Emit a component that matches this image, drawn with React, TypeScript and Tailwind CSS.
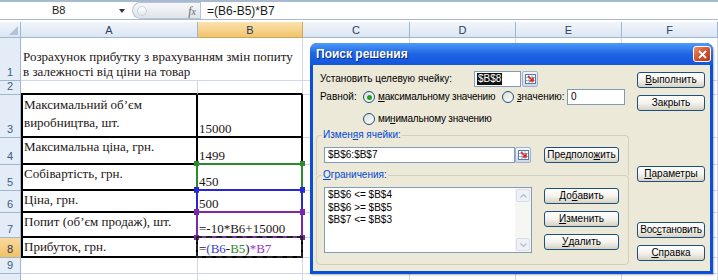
import type { ReactNode } from "react";

const gl = "border-r border-b border-[#d0d7e5]";

function RowHead({ n, on = false }: { n?: number; on?: boolean }) {
  return (
    <div
      className={`w-[21px] shrink-0 flex items-end justify-center pb-[1px] text-[11px] leading-[13px] font-['Liberation_Sans',Arial,sans-serif] border-r border-b border-[#9eb6ce] ${
        on ? "bg-gradient-to-b from-[#f9d99f] to-[#f1c15f] text-[#1e395b]" : "bg-[#e4ecf7] text-[#3e5c80]"
      }`}
    >
      {n}
    </div>
  );
}

function Rest() {
  return (
    <>
      <div className={`w-[107px] shrink-0 ${gl}`} />
      <div className={`w-[106px] shrink-0 ${gl}`} />
      <div className={`w-[106px] shrink-0 ${gl}`} />
      <div className={`w-[96px] shrink-0 ${gl}`} />
    </>
  );
}

function Corner({ pos, bg }: { pos: string; bg: string }) {
  return <div className={`absolute w-[5px] h-[5px] ${pos} ${bg}`} />;
}

function RangeBox({ border, dot }: { border: string; dot: string }) {
  return (
    <div className={`absolute -left-[2px] -top-[2px] -right-[2px] -bottom-[2px] border-2 ${border}`}>
      <Corner pos="-left-[4px] -top-[4px]" bg={dot} />
      <Corner pos="-right-[4px] -top-[4px]" bg={dot} />
      <Corner pos="-left-[4px] -bottom-[4px]" bg={dot} />
      <Corner pos="-right-[4px] -bottom-[4px]" bg={dot} />
    </div>
  );
}

type R = { n: number; h: string; a: ReactNode; b?: ReactNode; aCls?: string; box?: ReactNode; on?: boolean };

const rows: R[] = [
  { n: 3, h: "h-[43px]", a: <>Максимальний об’єм<br />виробництва, шт.</>, aCls: "leading-[18px] pt-[1px]", b: "15000" },
  { n: 4, h: "h-[27px]", a: "Максимальна ціна, грн.", b: "1499" },
  { n: 5, h: "h-[26px]", a: "Собівартість, грн.", b: "450", box: <RangeBox border="border-[#2e8a2e]" dot="bg-[#2e8a2e]" /> },
  { n: 6, h: "h-[22px]", a: "Ціна, грн.", b: "500", box: <RangeBox border="border-[#2727d8]" dot="bg-[#2727d8]" /> },
  { n: 7, h: "h-[25px]", a: "Попит (об’єм продаж), шт.", b: "=-10*B6+15000", box: <RangeBox border="border-[#7a2aa8]" dot="bg-[#7a2aa8]" /> },
  {
    n: 8,
    h: "h-[20px]",
    on: true,
    a: "Прибуток, грн.",
    b: (
      <>
        =<span className="text-[#3b3bd0]">(B6</span>-<span className="text-[#2e8a2e]">B5</span>)
        <span className="text-[#9a35c8]">*B7</span>
      </>
    ),
    box: <div className="absolute -left-[2px] -top-[2px] -right-[2px] -bottom-[2px] border-2 border-dashed border-[#222]" />,
  },
];

function Radio({ on = false }: { on?: boolean }) {
  return (
    <span className="w-[12px] h-[12px] shrink-0 rounded-full border border-[#1c5180] bg-gradient-to-br from-[#dcdcd5] to-white flex items-center justify-center">
      {on && <span className="w-[5px] h-[5px] rounded-full bg-[#21a121]" />}
    </span>
  );
}

function RefBtn() {
  return (
    <span className="w-[16px] h-[16px] shrink-0 rounded-[2px] border border-[#9fb1cf] bg-gradient-to-b from-[#f4f7fc] to-[#cbd7ea] flex items-center justify-center">
      <svg width="11" height="10" viewBox="0 0 11 10">
        <rect x="0.5" y="0.5" width="10" height="9" fill="#fff" stroke="#5b7aa8" />
        <path d="M1 3.5h9M1 6.5h9M4 1v8M7 1v8" stroke="#9bb0d0" strokeWidth="1" />
        <path d="M3 2l5 5M8 3.5V7H4.5" stroke="#d9271c" strokeWidth="1.6" fill="none" />
      </svg>
    </span>
  );
}

function Btn({ children, className = "" }: { children: ReactNode; className?: string }) {
  return (
    <div
      className={`h-[16px] flex items-center justify-center whitespace-nowrap rounded-[3px] border border-[#1d4f7f] bg-gradient-to-b from-white via-[#f4f3ee] to-[#d6d2c2] text-[10px] leading-[12px] text-black ${className}`}
    >
      {children}
    </div>
  );
}

const U = ({ children }: { children: ReactNode }) => <span className="underline underline-offset-[1px]">{children}</span>;

export default function App() {
  return (
    <div className="relative w-[718px] h-[280px] overflow-hidden bg-white font-['Liberation_Sans',Arial,sans-serif] text-black">
      {/* formula bar */}
      <div className="h-[20px] flex border-t-2 border-b border-[#a7bad2] bg-white text-[11px]">
        <div className="w-[132px] flex items-center">
          <span className="ml-[52px] text-[#1a1a1a]">B8</span>
          <span className="ml-auto mr-[7px] w-0 h-0 border-l-[3px] border-r-[3px] border-t-[4px] border-l-transparent border-r-transparent border-t-[#333]" />
        </div>
        <div className="w-[68px] rounded-l-full border-l border-y border-[#b9c5d4] bg-gradient-to-b from-[#f7f8fa] to-[#dfe4ea] flex items-center">
          <span className="ml-[4px] w-[10px] h-[10px] rounded-full border border-[#c9d0d8] bg-gradient-to-b from-white to-[#e6e9ee]" />
          <span className="ml-auto mr-[4px] italic font-['Liberation_Serif',serif] text-[12px] text-[#666]">
            f<span className="text-[10px]">x</span>
          </span>
        </div>
        <div className="flex-1 flex items-center pl-[6px] border-l border-[#b9c5d4] text-[12px] text-[#1a1a1a]">=(B6-B5)*B7</div>
      </div>

      {/* column headers */}
      <div className="mt-[2px] h-[16px] flex text-[11px] leading-[14px] text-[#27415f]">
        <div className="w-[21px] shrink-0 bg-gradient-to-b from-[#f2f6fb] to-[#dbe5f3] border-r border-b border-[#9eb6ce] flex items-end justify-end p-[2px]">
          <svg width="9" height="9" viewBox="0 0 9 9">
            <path d="M9 0V9H0Z" fill="#b4c3d7" />
          </svg>
        </div>
        <div className="w-[177px] shrink-0 flex items-center justify-center bg-gradient-to-b from-[#f2f6fb] to-[#dbe5f3] border-r border-b border-[#9eb6ce]">A</div>
        <div className="w-[105px] shrink-0 flex items-center justify-center bg-gradient-to-b from-[#fbe2b0] to-[#f2c46a] border-r border-b border-[#c9a95e] text-[#1e395b]">B</div>
        <div className="w-[107px] shrink-0 flex items-center justify-center bg-gradient-to-b from-[#f2f6fb] to-[#dbe5f3] border-r border-b border-[#9eb6ce]">C</div>
        <div className="w-[106px] shrink-0 flex items-center justify-center bg-gradient-to-b from-[#f2f6fb] to-[#dbe5f3] border-r border-b border-[#9eb6ce]">D</div>
        <div className="w-[106px] shrink-0 flex items-center justify-center bg-gradient-to-b from-[#f2f6fb] to-[#dbe5f3] border-r border-b border-[#9eb6ce]">E</div>
        <div className="w-[96px] shrink-0 flex items-center justify-center bg-gradient-to-b from-[#f2f6fb] to-[#dbe5f3] border-r border-b border-[#9eb6ce]">F</div>
      </div>

      {/* sheet */}
      <div className="font-['Liberation_Serif','Times_New_Roman',serif] text-[13px] text-[#1d1515]">
        <div className="h-[43px] flex">
          <RowHead n={1} />
          <div className={`w-[282px] shrink-0 flex items-end pl-[2px] pb-[1px] leading-[15px] ${gl}`}>
            Розрахунок прибутку з врахуванням змін попиту в залежності від ціни на товар
          </div>
          <Rest />
        </div>
        <div className="h-[14px] flex">
          <RowHead n={2} />
          <div className="w-[177px] shrink-0 border-r border-[#d0d7e5] border-b-2 border-b-black" />
          <div className="w-[105px] shrink-0 border-r border-[#d0d7e5] border-b-2 border-b-black" />
          <Rest />
        </div>
        {rows.map((r) => (
          <div key={r.n} className={`${r.h} flex`}>
            <RowHead n={r.n} on={r.on} />
            <div className={`w-[177px] shrink-0 border-l-2 border-r-2 border-b-2 border-black pl-[1px] ${r.aCls ?? "leading-[15px] pt-[1px]"}`}>
              {r.a}
            </div>
            <div className="w-[105px] shrink-0 relative border-r-2 border-b-2 border-black flex items-end pl-[1px] leading-[15px]">
              <span>{r.b}</span>
              {r.box}
            </div>
            <Rest />
          </div>
        ))}
        <div className="h-[16px] flex">
          <RowHead n={9} />
          <div className={`w-[177px] shrink-0 ${gl}`} />
          <div className={`w-[105px] shrink-0 ${gl}`} />
          <Rest />
        </div>
        <div className="h-[16px] flex">
          <RowHead />
          <div className={`w-[177px] shrink-0 ${gl}`} />
          <div className={`w-[105px] shrink-0 ${gl}`} />
          <Rest />
        </div>
      </div>

      {/* solver dialog */}
      <div className="absolute left-[310px] top-[43px] w-[403px] h-[231px] rounded-t-[7px] bg-[#0a4fd8] flex flex-col px-[3px] pb-[3px] shadow-[1px_1px_2px_rgba(0,0,0,0.3)]">
        <div className="h-[22px] -mx-[3px] rounded-t-[7px] bg-gradient-to-b from-[#4f9bf7] via-[#1f64e4] to-[#1257dc] flex items-center pl-[6px] pr-[2px]">
          <span className="text-white font-bold text-[12px] [text-shadow:1px_1px_0_#0a2a80]">Поиск решения</span>
          <span className="ml-auto w-[18px] h-[16px] rounded-[3px] border border-white bg-gradient-to-br from-[#ec8c6c] via-[#d4542e] to-[#b8381a] flex items-center justify-center">
            <svg width="9" height="9" viewBox="0 0 9 9">
              <path d="M1 1l7 7M8 1L1 8" stroke="#fff" strokeWidth="1.8" />
            </svg>
          </span>
        </div>
        <div className="flex-1 bg-[#ece9d8] flex text-[10px] leading-[12px] whitespace-nowrap">
          {/* left part */}
          <div className="w-[324px] flex flex-col">
            <div className="mt-[6px] h-[16px] flex items-center">
              <span className="w-[161px] pl-[7px]">Установить целевую ячейку:</span>
              <span className="w-[47px] h-[16px] border border-[#7f9db9] bg-white flex items-center pl-[2px]">
                <span className="bg-[#111] text-white px-[1px]">$B$8</span>
              </span>
              <span className="ml-[1px]">
                <RefBtn />
              </span>
            </div>
            <div className="mt-[2px] h-[16px] flex items-center">
              <span className="w-[50px] pl-[7px]">Равной:</span>
              <span className="w-[139px] flex items-center gap-[3px] tracking-[-0.2px]">
                <Radio on />
                <span>
                  <U>м</U>аксимальному значению
                </span>
              </span>
              <span className="w-[65px] flex items-center gap-[3px]">
                <Radio />
                <span>
                  <U>з</U>начению:
                </span>
              </span>
              <span className="w-[58px] h-[16px] border border-[#7f9db9] bg-white flex items-center pl-[3px]">0</span>
            </div>
            <div className="mt-[6px] h-[16px] flex items-center gap-[3px] pl-[50px] tracking-[-0.2px]">
              <Radio />
              <span>
                ми<U>н</U>имальному значению
              </span>
            </div>

            <div className="relative mt-[8px] ml-[3px] w-[313px] h-[40px] border border-b-0 border-[#d0d0bf] rounded-t-[4px] pt-[11px] pl-[7px] flex items-start">
              <span className="absolute left-[5px] -top-[7px] px-[1px] bg-[#ece9d8] text-[#0046d5]">
                Измен<U>я</U>я ячейки:
              </span>
              <span className="w-[191px] h-[16px] border border-[#7f9db9] bg-white flex items-center pl-[3px]">$B$6:$B$7</span>
              <RefBtn />
              <Btn className="ml-[13px] w-[75px]">
                Предполо<U>ж</U>ить
              </Btn>
            </div>
            <div className="relative ml-[3px] w-[313px] h-[90px] border border-[#d0d0bf] rounded-[4px] pt-[11px] pl-[7px] flex items-start">
              <span className="absolute left-[5px] -top-[7px] px-[1px] bg-[#ece9d8] text-[#0046d5]">
                <U>О</U>граничения:
              </span>
              <div className="w-[208px] h-[66px] border border-[#7f9db9] bg-white flex">
                <div className="flex-1 pl-[3px] pt-[1px] leading-[12.5px]">
                  <div>$B$6 &lt;= $B$4</div>
                  <div>$B$6 &gt;= $B$5</div>
                  <div>$B$7 &lt;= $B$3</div>
                </div>
                <div className="w-[16px] bg-[#f6f6f2] flex flex-col justify-between p-[1px]">
                  <span className="h-[13px] rounded-[2px] border border-[#d8dfe9] bg-[#eef2f8] flex items-center justify-center">
                    <svg width="7" height="4" viewBox="0 0 7 4">
                      <path d="M0.5 3.5L3.5 0.5L6.5 3.5" stroke="#b5bdc8" strokeWidth="1.3" fill="none" />
                    </svg>
                  </span>
                  <span className="h-[13px] rounded-[2px] border border-[#d8dfe9] bg-[#eef2f8] flex items-center justify-center">
                    <svg width="7" height="4" viewBox="0 0 7 4">
                      <path d="M0.5 0.5L3.5 3.5L6.5 0.5" stroke="#b5bdc8" strokeWidth="1.3" fill="none" />
                    </svg>
                  </span>
                </div>
              </div>
              <div className="ml-[12px] mt-[1px] w-[75px] flex flex-col gap-[7px]">
                <Btn>
                  До<U>б</U>авить
                </Btn>
                <Btn>
                  <U>И</U>зменить
                </Btn>
                <Btn>
                  <U>У</U>далить
                </Btn>
              </div>
            </div>
          </div>

          {/* right buttons */}
          <div className="w-[68px] flex flex-col">
            <Btn className="mt-[7px]">
              <U>В</U>ыполнить
            </Btn>
            <Btn className="mt-[7px]">Закрыть</Btn>
            <Btn className="mt-[55px]">
              <U>П</U>араметры
            </Btn>
            <Btn className="mt-[40px] tracking-[-0.2px]">
              Вос<U>с</U>тановить
            </Btn>
            <Btn className="mt-[7px]">
              <U>С</U>правка
            </Btn>
          </div>
        </div>
      </div>
    </div>
  );
}
